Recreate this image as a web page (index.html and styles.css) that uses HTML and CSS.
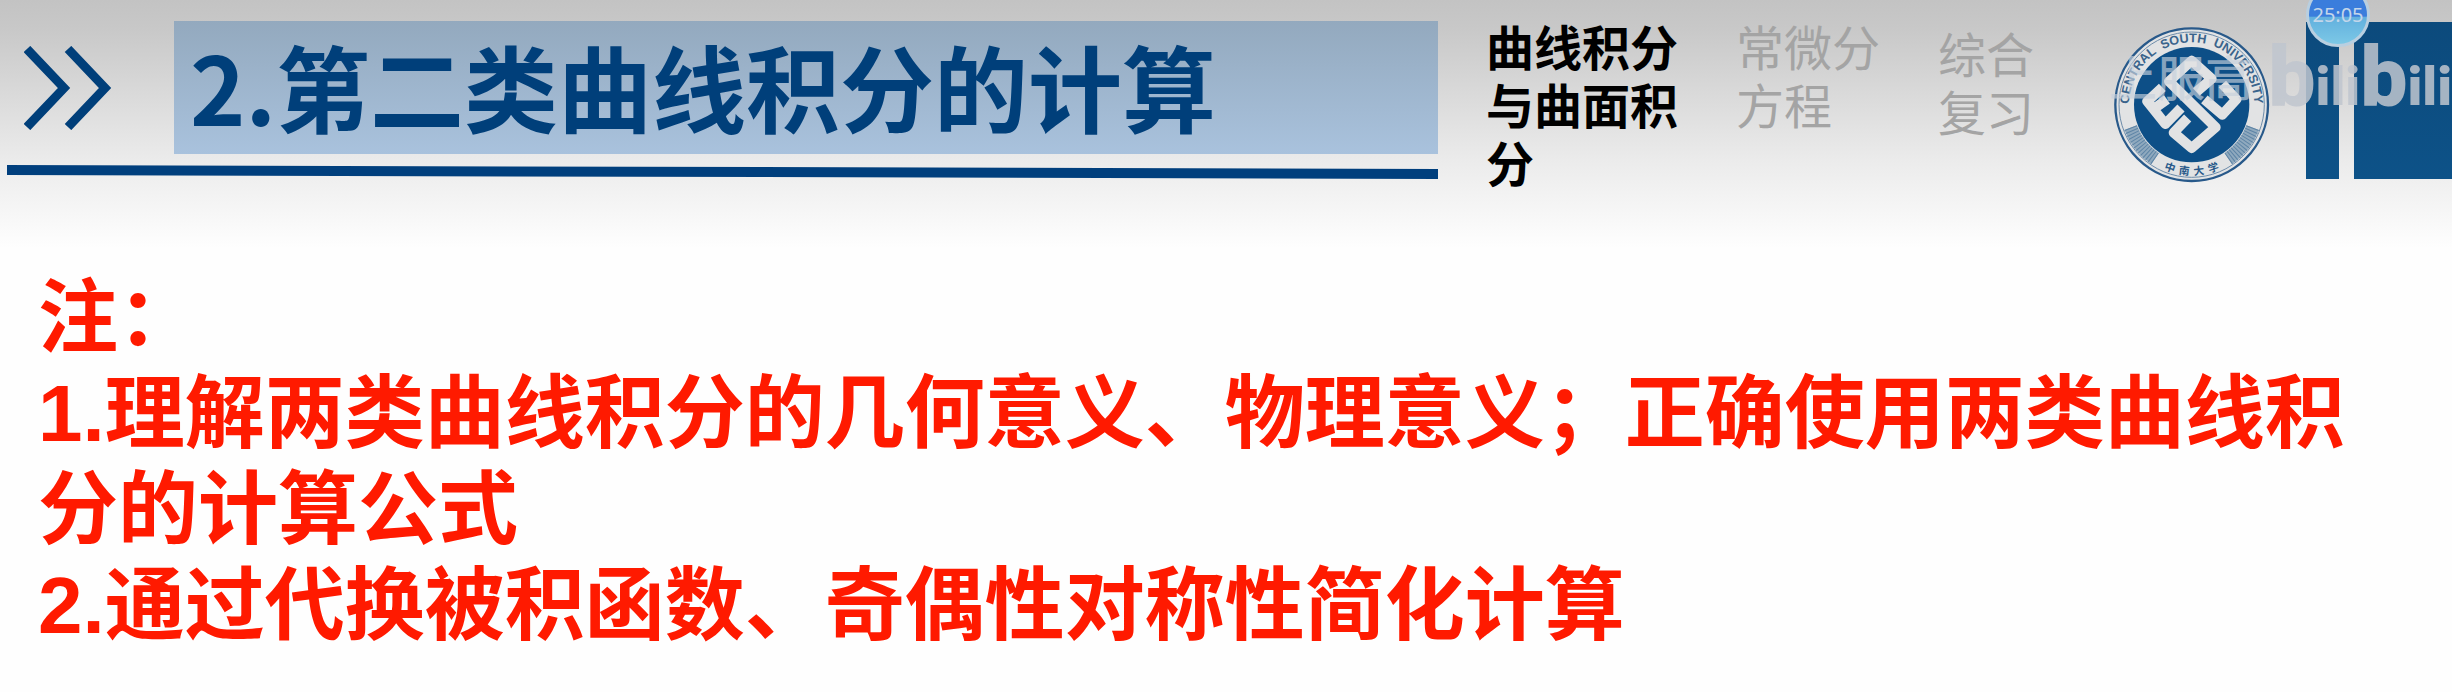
FILE: index.html
```html
<!DOCTYPE html>
<html lang="zh-CN">
<head>
<meta charset="utf-8">
<title>第二类曲线积分的计算</title>
<link rel="stylesheet" href="styles.css">
</head>
<body>
<header class="header">
  <div class="heading">
    <div class="heading-row">
      <svg class="chevrons" viewBox="0 0 94 84" aria-hidden="true">
        <path d="M3 3 L40 42 L3 81 M44 3 L81 42 L44 81" fill="none" stroke="#003f7a" stroke-width="9"/>
      </svg>
      <h1 class="title">2.第二类曲线积分的计算</h1>
    </div>
    <svg class="rule" viewBox="0 0 1431 14" preserveAspectRatio="none" aria-hidden="true">
      <path d="M0 0 L1431 4 V14 L0 10 Z" fill="#003f7d"/>
    </svg>
  </div>
  <nav class="nav">
    <a class="nav-item nav-item-current" href="#integral">曲线积分与曲面积分</a>
    <a class="nav-item nav-item-ode" href="#ode">常微分方程</a>
    <a class="nav-item nav-item-review" href="#review">综合复习</a>
  </nav>
  <div class="brand">
    <svg class="emblem" viewBox="100 78 474 474" role="img" aria-label="中南大学">
      <defs>
        <path id="arc-top" d="M160 381 A188 188 0 1 1 512 381"/>
        <path id="arc-bottom" d="M200 476 A212 212 0 0 0 472 476"/>
      </defs>
      <circle cx="336" cy="314" r="229" fill="#e2e3e4" stroke="#28598a" stroke-width="7"/>
      <g fill="none" stroke="#8fa9be" stroke-width="40">
        <path d="M153 383 A196 196 0 0 0 226 476"/>
        <path d="M446 476 A196 196 0 0 0 519 383"/>
      </g>
      <g fill="none" stroke="#5d84a6" stroke-width="40" stroke-dasharray="3 6">
        <path d="M153 383 A196 196 0 0 0 226 476"/>
        <path d="M446 476 A196 196 0 0 0 519 383"/>
      </g>
      <circle cx="336" cy="314" r="218" fill="none" stroke="#6d8caa" stroke-width="3"/>
      <circle cx="336" cy="314" r="173" fill="#0d4f87"/>
      <text class="emblem-latin"><textPath href="#arc-top" startOffset="50%">CENTRAL &#160;SOUTH &#160;UNIVERSITY</textPath></text>
      <text class="emblem-han"><textPath href="#arc-bottom" startOffset="50%">中 &#160;南 &#160;大 &#160;学</textPath></text>
      <g fill="none" stroke="#e1e2e3" stroke-width="30" stroke-linejoin="round">
        <path d="M350 276 L396 236 L336 182 L268 244 L408 382 L336 444 L282 398 L324 354"/>
        <path d="M248 262 L203 304 L257 372 L304 324 M226 324 L262 298"/>
        <path d="M428 252 L470 298 L428 344 L374 298"/>
      </g>
    </svg>
    <div class="bars" aria-hidden="true">
      <span class="bar bar-narrow"></span>
      <span class="bar bar-wide"></span>
    </div>
    <span class="uploader">上服高</span>
    <span class="watermark"><span class="tall">b</span>ili<span class="tall">b</span>ili</span>
    <time class="clock">25:05</time>
  </div>
</header>
<main class="notes">
  <p>注：</p>
  <p>1.理解两类曲线积分的几何意义、物理意义；正确使用两类曲线积分的计算公式</p>
  <p>2.通过代换被积函数、奇偶性对称性简化计算</p>
</main>
</body>
</html>
```
FILE: styles.css
```css
* { box-sizing: border-box; }

body {
  margin: 0;
  min-height: 100vh;
  background: #fefefe;
  font-family: "Noto Sans CJK SC", sans-serif;
}

.header {
  display: flex;
  align-items: flex-start;
  min-height: 252px;
  padding: 21px 0 0 7px;
  background: linear-gradient(#c3c3c3 0, #c8c8c8 28px, #ebebeb 160px, #fefefe 248px);
}

.heading { flex: 1; }
.heading-row { display: flex; align-items: center; }
.chevrons { width: 94px; height: 84px; margin: 0 56px 0 17px; }

.title {
  flex: 1;
  margin: 0;
  padding: 0 16px 5px;
  background: linear-gradient(#93a9be, #a9c2dd);
  color: #003f7a;
  font-size: 94px;
  line-height: 128px;
  white-space: nowrap;
}

.rule { display: block; width: 100%; height: 14px; margin-top: 11px; }

.nav {
  display: flex;
  gap: 58px;
  margin: -5px 0 0 48px;
  font-size: 48px;
  line-height: 58px;
}
.nav-item { color: #a4a4a4; text-decoration: none; }
.nav-item-current { width: 4em; color: #000; font-weight: 700; }
.nav-item-ode { width: 3em; }
.nav-item-review { width: 2em; padding-top: 7px; }

.brand { position: relative; display: flex; margin-left: 79px; }
.emblem { width: 158px; height: 158px; margin-top: 5px; }
.emblem-latin {
  fill: #3a648c;
  font: 700 38px "Liberation Sans", sans-serif;
  text-anchor: middle;
}
.emblem-han {
  fill: #28598a;
  font: 700 32px "Noto Sans CJK SC", sans-serif;
  text-anchor: middle;
}

.bars { display: flex; gap: 15px; margin: 1px 0 0 35px; }
.bar { height: 157px; background: linear-gradient(#0c4a7c, #0d5288); }
.bar-narrow { width: 33px; }
.bar-wide { width: 98px; }

.uploader {
  position: absolute;
  top: 28px;
  left: -4px;
  color: #c6d0dc;
  opacity: 0.65;
  font-size: 48px;
  font-weight: 500;
  line-height: 52px;
}

.watermark {
  position: absolute;
  top: 6px;
  right: 0;
  color: #c0c6cf;
  opacity: 0.85;
  font: 900 54px/100px Roboto, sans-serif;
}
.tall { font-size: 84px; }

.clock {
  position: absolute;
  top: -38px;
  right: 82px;
  width: 64px;
  height: 64px;
  border: 3px solid #b9cfe0;
  border-radius: 50%;
  background: linear-gradient(#3a7ddc 52%, #62b0de 54%, #7cc8e6);
  color: #c3d6ea;
  font: 20px/58px "Noto Sans", sans-serif;
  text-align: center;
}

.notes {
  padding: 18px 60px 0 38px;
  color: #ff1a00;
  font-family: "Liberation Sans", "Noto Sans CJK SC", sans-serif;
  font-size: 80px;
  font-weight: 700;
  line-height: 96px;
}
.notes p { margin: 0; }
```
